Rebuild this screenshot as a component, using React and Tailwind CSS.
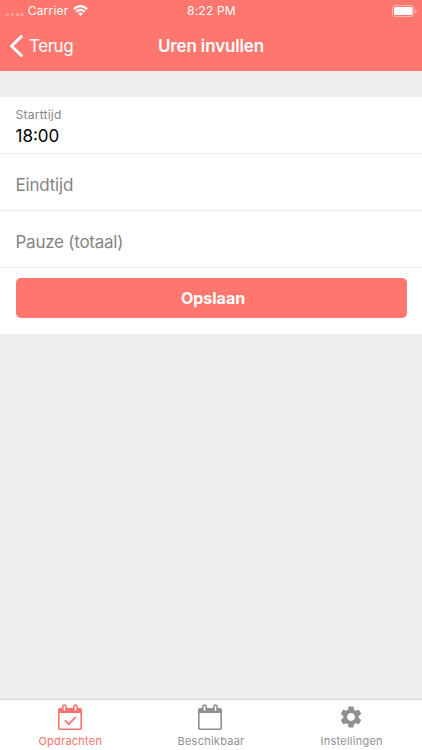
import { MdSettings } from 'react-icons/md';

const CalendarIcon = ({ checked }) => (
    <svg width="25" height="26" viewBox="0 0 25 26" fill="none">
        <path
            fillRule="evenodd"
            fill="currentColor"
            d="M1.8 4H22.2A1.8 1.8 0 0 1 24 5.8V24A2 2 0 0 1 22 26H2A2 2 0 0 1 0 24V5.8A1.8 1.8 0 0 1 1.8 4ZM1.6 9V23.6Q1.6 24.4 2.4 24.4H21.6Q22.4 24.4 22.4 23.6V9Z"
        />
        <rect x="4.9" y="1" width="3.2" height="6.6" rx="1.6" fill="white" stroke="currentColor" strokeWidth="1.6" />
        <rect x="15.9" y="1" width="3.2" height="6.6" rx="1.6" fill="white" stroke="currentColor" strokeWidth="1.6" />
        {checked && <path d="M6.8 16.4L10.7 20.2L17.8 13" stroke="currentColor" strokeWidth="1.7" />}
    </svg>
);

const WifiIcon = () => (
    <svg width="15" height="11" viewBox="0 0 15 11" fill="none" stroke="white" strokeWidth="2.2">
        <path d="M.8 4.1Q7.5-1.9 14.2 4.1" />
        <path d="M3.2 6.8Q7.5 3 11.8 6.8" />
        <path d="M5.1 8.4Q7.5 6.4 9.9 8.4L7.5 10.9Z" fill="white" stroke="none" />
    </svg>
);

const BatteryIcon = () => (
    <svg width="25" height="12" viewBox="0 0 25 12" fill="none">
        <rect x=".5" y=".5" width="21.5" height="11" rx="3" stroke="white" strokeOpacity=".45" />
        <rect x="2" y="2" width="18.5" height="8" rx="1.5" fill="white" />
        <path d="M23.2 4V8Q24.6 7.4 24.6 6T23.2 4Z" fill="white" fillOpacity=".5" />
    </svg>
);

const tabs = [
    { label: 'Opdrachten', icon: <CalendarIcon checked />, color: 'text-[#f7736c]' },
    { label: 'Beschikbaar', icon: <CalendarIcon />, color: 'text-[#8f8f94]' },
    { label: 'Instellingen', icon: <MdSettings className="mr-px size-[26px]" />, color: 'text-[#8f8f94]' }
];

const App = () => (
    <div className="flex h-[750px] w-full flex-col bg-[#ededed] font-['Inter',sans-serif]">
        <header className="h-[71px] bg-[#ff766e] text-white">
            <div className="grid h-5 grid-cols-3 items-center pr-[5px] pl-[6px] text-[12px] leading-5 tracking-[0.2px]">
                <div className="flex items-center">
                    <div className="mt-[8px] mr-1 flex gap-[1.5px]">
                        {[0, 1, 2, 3].map((dot) => (
                            <span key={dot} className="size-[3.3px] rounded-full bg-white/35" />
                        ))}
                    </div>
                    <span className="mt-px mr-[5px]">Carrier</span>
                    <WifiIcon />
                </div>
                <span className="mt-px text-center">8:22 PM</span>
                <div className="flex justify-end">
                    <BatteryIcon />
                </div>
            </div>
            <div className="grid h-[51px] grid-cols-[1fr_auto_1fr] items-center px-2.5 pt-px">
                <button className="flex items-center gap-[6px] text-[17px] tracking-[-0.45px]">
                    <svg width="13" height="22" viewBox="0 0 13 22" fill="none" stroke="white" strokeWidth="3">
                        <path d="M11.3 1.5L1.6 11L11.3 20.5" strokeLinecap="round" />
                    </svg>
                    <span className="mt-px">Terug</span>
                </button>
                <h1 className="mt-px text-[17px] font-semibold tracking-[-0.15px]">Uren invullen</h1>
            </div>
        </header>

        <main className="mt-[26px] h-[237px] bg-white text-[17px] text-[#858585]">
            <div className="h-[57px] border-b border-[#ededed] px-[15.5px] pt-[9px]">
                <div className="text-[12px] leading-[18px] tracking-[0.25px]">Starttijd</div>
                <div className="pt-px leading-[22px] text-black">18:00</div>
            </div>
            <div className="flex h-[57px] items-center border-b border-[#ededed] px-[15.5px] pt-2 tracking-[-0.2px]">
                Eindtijd
            </div>
            <div className="flex h-[57px] items-center border-b border-[#ededed] px-[15.5px] pt-2 tracking-[-0.25px]">
                Pauze (totaal)
            </div>
            <div className="px-[15.5px] pt-2.5">
                <button className="h-10 w-full rounded-[5px] bg-[#ff766e] pl-1 text-[16px] font-bold text-white">
                    Opslaan
                </button>
            </div>
        </main>

        <nav className="mt-auto grid h-[51px] grid-cols-3 border-t border-[#d8d8d8] bg-white">
            {tabs.map((tab) => (
                <div key={tab.label} className={`flex flex-col items-center pt-[4px] ${tab.color}`}>
                    <div className="flex h-[26px] items-center">{tab.icon}</div>
                    <span className="mt-1 text-[11px] leading-[15px] tracking-[0.25px]">{tab.label}</span>
                </div>
            ))}
        </nav>
    </div>
);

export default App;
